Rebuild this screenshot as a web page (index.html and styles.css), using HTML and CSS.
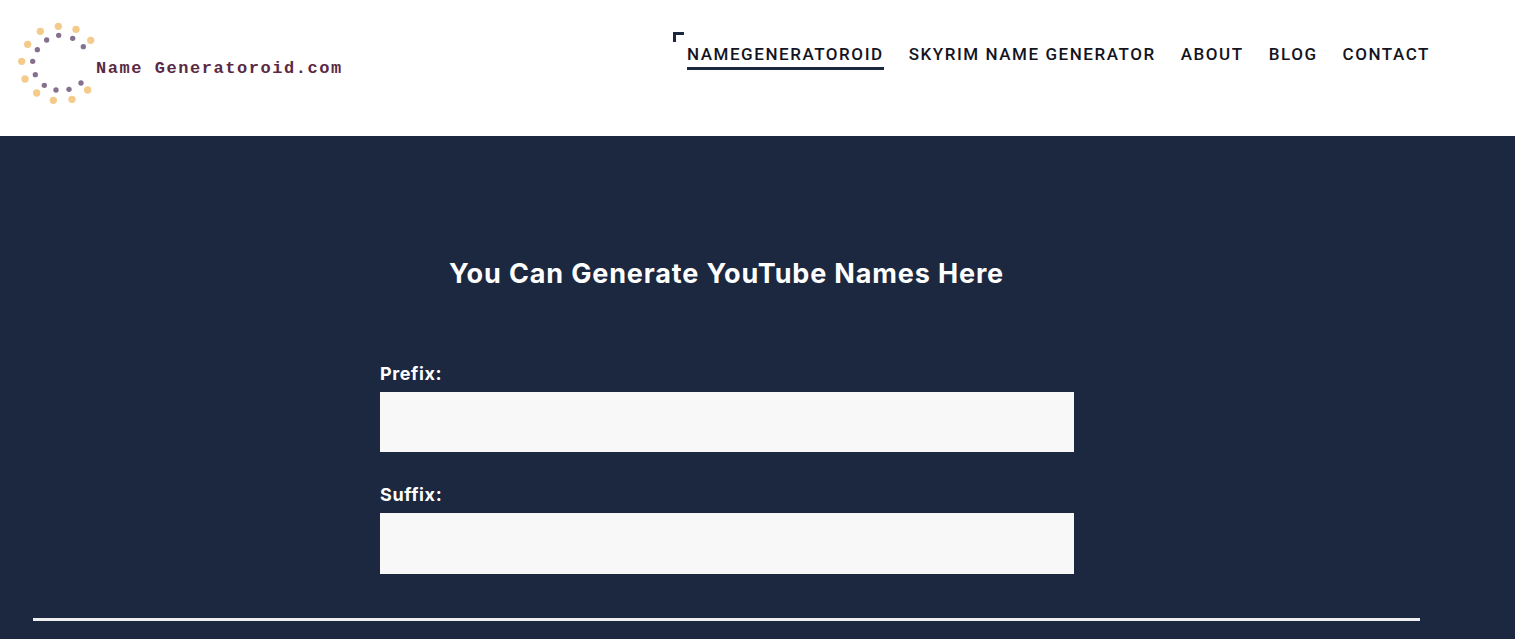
FILE: index.html
```html
<!DOCTYPE html>
<html lang="en">
<head>
  <meta charset="UTF-8" />
  <meta name="viewport" content="width=device-width, initial-scale=1.0"/>
  <title>Name Generatoroid</title>
  <link rel="stylesheet" href="styles.css">
</head>
<body>
  <header class="site-header">
    <a class="brand" href="#">
      <svg class="brand-mark" width="80" height="110" viewBox="0 0 240 330" aria-hidden="true">
        <g fill="#f5cb8c">
          <circle cx="121" cy="49" r="11"/><circle cx="174" cy="58" r="11"/><circle cx="218" cy="91" r="11"/>
          <circle cx="67" cy="64" r="11"/><circle cx="29" cy="103" r="11"/><circle cx="11" cy="154" r="11"/>
          <circle cx="21" cy="207" r="11"/><circle cx="56" cy="249" r="11"/><circle cx="106" cy="271" r="11"/>
          <circle cx="162" cy="268" r="11"/><circle cx="209" cy="240" r="11"/>
        </g>
        <g fill="#86708f">
          <circle cx="122" cy="76" r="8"/><circle cx="164" cy="85" r="8"/><circle cx="196" cy="110" r="8"/>
          <circle cx="86" cy="90" r="8"/><circle cx="58" cy="119" r="8"/><circle cx="44" cy="154" r="8"/>
          <circle cx="52" cy="194" r="8"/><circle cx="79" cy="226" r="8"/><circle cx="114" cy="240" r="8"/>
          <circle cx="153" cy="238" r="8"/><circle cx="189" cy="219" r="8"/>
        </g>
      </svg>
      <span class="brand-name">Name Generatoroid.com</span>
    </a>
    <nav class="main-nav">
      <span class="nav-corner"></span>
      <a class="nav-link current" href="#">NAMEGENERATOROID</a>
      <a class="nav-link" href="#">SKYRIM NAME GENERATOR</a>
      <a class="nav-link" href="#">ABOUT</a>
      <a class="nav-link" href="#">BLOG</a>
      <a class="nav-link" href="#">CONTACT</a>
    </nav>
  </header>

  <main class="generator">
    <h1>You Can Generate YouTube Names Here</h1>
    <form class="name-form">
      <label for="prefix">Prefix:</label>
      <input type="text" id="prefix" />
      <label for="suffix">Suffix:</label>
      <input type="text" id="suffix" />
    </form>
    <hr class="divider" />
  </main>
</body>
</html>
```

FILE: styles.css
```css
* { box-sizing: border-box; }
html, body { height: 100%; }
body {
  margin: 0;
  font-family: 'Inter', sans-serif;
  background: #1b283f;
  overflow: hidden;
}
a { text-decoration: none; color: inherit; }

.site-header {
  height: 136px;
  background: #fff;
  display: flex;
  justify-content: space-between;
  padding: 0 85px 0 15px;
}
.brand { display: flex; align-items: flex-start; }
.brand-mark { margin: 10px 0 0 3px; flex: none; filter: blur(0.6px); }
.brand-name {
  margin: 59px 0 0 -2px;
  font-family: 'Liberation Mono', monospace;
  font-weight: 700;
  font-size: 17px;
  line-height: 20px;
  letter-spacing: 1.55px;
  color: #5a2a45;
  white-space: nowrap;
}

.main-nav {
  position: relative;
  display: flex;
  align-items: flex-start;
  gap: 25px;
  padding-top: 44px;
}
.nav-link {
  font-family: 'Roboto', sans-serif;
  font-size: 17px;
  font-weight: 500;
  line-height: 20px;
  letter-spacing: 1.55px;
  color: #14141e;
  padding-bottom: 3px;
  white-space: nowrap;
}
.nav-link.current { border-bottom: 3px solid #1b283f; }
.nav-corner {
  position: absolute;
  left: -14px;
  top: 32px;
  width: 11px;
  height: 10px;
  border-top: 3px solid #1b283f;
  border-left: 3px solid #1b283f;
}

.generator {
  display: flex;
  flex-direction: column;
  padding: 120px 95px 0 33px;
}
.generator h1 {
  margin: 0;
  text-align: center;
  font-size: 27px;
  font-weight: 700;
  line-height: 36px;
  letter-spacing: 0.85px;
  color: #fff;
}
.name-form {
  display: flex;
  flex-direction: column;
  width: 694px;
  margin: 71px 0 0 347px;
}
.name-form label {
  font-size: 18px;
  font-weight: 700;
  line-height: 22px;
  letter-spacing: 0.6px;
  color: #fff;
  margin-bottom: 7px;
}
.name-form input {
  height: 60px;
  border: none;
  background: #f8f8f8;
  margin-bottom: 32px;
}
.name-form input:last-child { height: 61px; margin-bottom: 0; }
.divider {
  margin: 44px 0 0;
  height: 3px;
  border: none;
  background: #efefef;
}
```
